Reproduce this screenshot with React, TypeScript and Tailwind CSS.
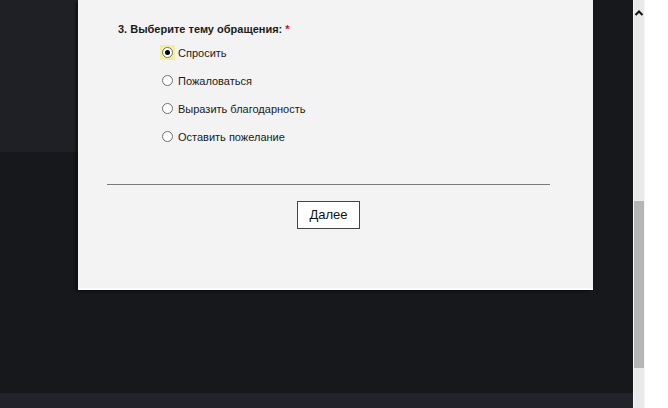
import React from 'react';

const options = ['Спросить', 'Пожаловаться', 'Выразить благодарность', 'Оставить пожелание'];

function Radio({ checked }: { checked: boolean }) {
    return (
        <span className={checked ? 'flex h-[15px] w-[15px] items-center justify-center bg-[#f3ee9c]' : 'flex h-[15px] w-[15px] items-center justify-center'}>
            <span className="flex h-[11px] w-[11px] items-center justify-center rounded-full border border-[#6f6f6f] bg-white">
                {checked && <span className="h-[5px] w-[5px] rounded-full bg-black" />}
            </span>
        </span>
    );
}

function App() {
    return (
        <div className="flex h-[408px] w-[668px] overflow-hidden bg-white" style={{ fontFamily: '"Liberation Sans", Arial, sans-serif' }}>
            <div className="flex w-[633px] flex-col bg-[#17181c]">
                <div className="flex flex-1">
                    <div className="flex w-[78px] flex-col">
                        <div className="h-[152px] bg-[#1f2025]" />
                        <div className="flex-1 bg-[#17181c]" />
                    </div>
                    <div className="flex h-[290px] w-[515px] flex-col border-b-2 border-[#fbfbfb] bg-[#f2f3f2] pt-[22px] text-[#1b1b1b] shadow-[-3px_2px_2px_rgba(0,0,0,0.35)]">
                        <div className="pl-[40px] text-[11px] leading-[14px] font-bold">
                            3. Выберите тему обращения: <span className="text-[#c8102e]">*</span>
                        </div>
                        <div className="mt-[2px] flex flex-col pl-[82px]">
                            {options.map((o, i) => (
                                <div key={o} className="flex h-[28px] items-center gap-[3px] pt-px">
                                    <Radio checked={i === 0} />
                                    <span className="text-[11px] leading-[14px]">{o}</span>
                                </div>
                            ))}
                        </div>
                        <div className="mt-[34px] ml-[29px] flex w-[443px] flex-col items-center">
                            <div className="h-px w-full bg-[#7a7a7a]" />
                            <button className="mt-[16px] h-[28px] w-[63px] border border-[#444] bg-white text-[13px] text-[#111]">
                                Далее
                            </button>
                        </div>
                    </div>
                    <div className="flex-1" />
                </div>
                <div className="h-[15px] bg-[#22232b]" />
            </div>
            <div className="flex w-[12px] flex-col items-center border-x border-[#f7f7f7] bg-[#e9e9e9]">
                <svg width="10" height="8" viewBox="0 0 10 8" className="mt-[9px]">
                    <path d="M1.5 6 L5 2.5 L8.5 6" fill="none" stroke="#111" strokeWidth="2" />
                </svg>
                <div className="mt-[184px] h-[167px] w-full bg-[#b5b5b5]" />
            </div>
            <div className="flex-1 bg-white" />
        </div>
    );
}

export default App;
